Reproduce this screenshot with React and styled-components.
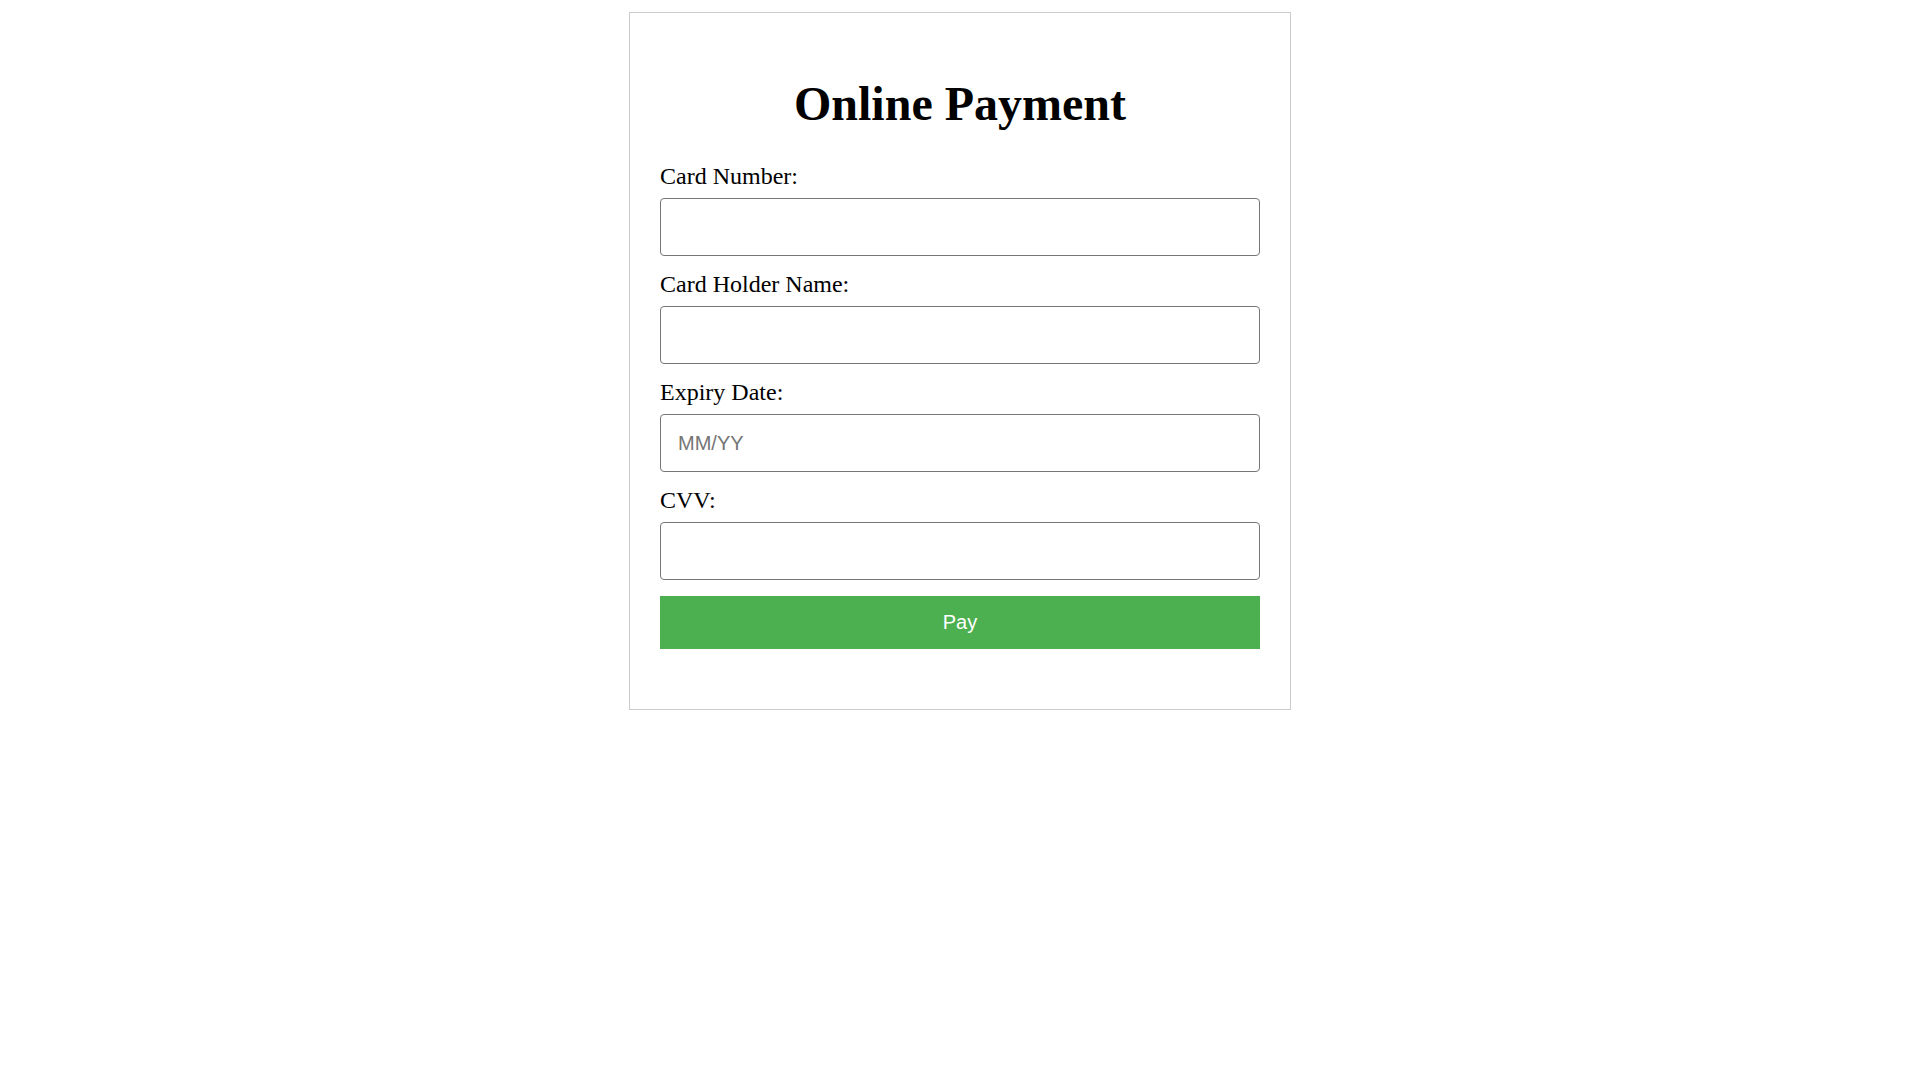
import React from 'react';
import styled, { createGlobalStyle } from 'styled-components';

const GlobalStyle = createGlobalStyle`
  body {
    margin: 0;
    padding: 12px 0 0;
    background: #fff;
    font-family: "Liberation Serif", "Times New Roman", serif;
    color: #000;
  }
`;

const Card = styled.div`
  width: 600px;
  margin: 0 auto;
  padding: 31px 30px 30px;
  border: 1px solid #ccc;
`;

const Title = styled.h1`
  margin: 32px 0 31px;
  font-size: 48px;
  font-weight: 700;
  text-align: center;
`;

const Form = styled.form`
  display: flex;
  flex-direction: column;
  margin-bottom: 30px;
`;

const Label = styled.label`
  display: block;
  font-size: 24px;
  line-height: 28px;
  margin-bottom: 8px;
`;

const Input = styled.input`
  box-sizing: border-box;
  width: 100%;
  height: 58px;
  margin: 0 0 14px;
  padding: 0 17px;
  border: 1px solid #767676;
  border-radius: 4px;
  font-family: "Liberation Sans", Arial, sans-serif;
  font-size: 20px;
  color: #000;
  background: #fff;

  &::placeholder {
    color: #757575;
  }
`;

const PayButton = styled.button`
  width: 100%;
  height: 53px;
  margin-top: 2px;
  border: none;
  background-color: #4caf50;
  color: #fff;
  font-family: "Liberation Sans", Arial, sans-serif;
  font-size: 20px;
  cursor: pointer;
`;

const fields = [
  { id: 'card-number', label: 'Card Number:' },
  { id: 'card-holder', label: 'Card Holder Name:' },
  { id: 'expiry', label: 'Expiry Date:', placeholder: 'MM/YY' },
  { id: 'cvv', label: 'CVV:' },
];

const App = () => (
  <>
    <GlobalStyle />
    <Card>
      <Title>Online Payment</Title>
      <Form onSubmit={(e) => e.preventDefault()}>
        {fields.map((field) => (
          <React.Fragment key={field.id}>
            <Label htmlFor={field.id}>{field.label}</Label>
            <Input id={field.id} type="text" placeholder={field.placeholder} />
          </React.Fragment>
        ))}
        <PayButton type="submit">Pay</PayButton>
      </Form>
    </Card>
  </>
);

export default App;
